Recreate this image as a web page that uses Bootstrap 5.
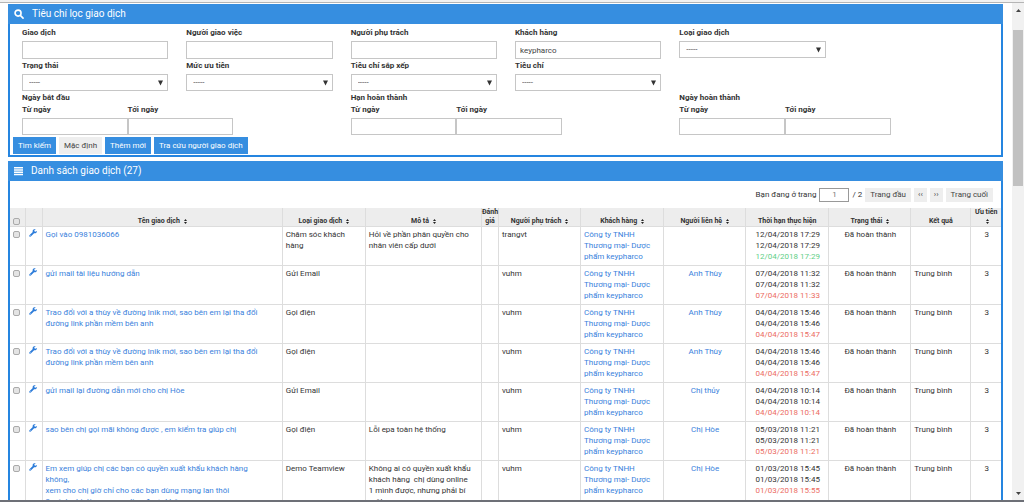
<!DOCTYPE html>
<html lang="vi">
<head>
<meta charset="utf-8">
<meta name="viewport" content="width=device-width, initial-scale=1">
<title>Danh sách giao dịch</title>
<link rel="stylesheet" href="https://cdn.jsdelivr.net/npm/bootstrap@5.3.0/dist/css/bootstrap.min.css">
<style>
  :root { --brand: #368ee0; --brand-edge: #2585e0; --line: #ddd; --soft: #eee; --link: #3a7fdc; }
  body { font: 400 8px/11px Roboto, sans-serif; color: #333; background: #fff; }
  a { color: var(--link); text-decoration: none; }
  .top-edge { height: 3px; background: #f1f1f1; border-bottom: 1px solid #b5b5b5; }
  .bottom-edge { height: 2px; background: #6d7077; }
  .content { padding: 1px 9px 0 8px; gap: 4px; min-width: 0; }

  .panel { border: 2px solid var(--brand-edge); border-top: 0; background: #fff; }
  .panel-title { height: 20px; margin: 0 -2px; padding: 0 6px; background: var(--brand); color: #fff;
    font-size: 10px; line-height: 20px; font-weight: 400; }
  .panel-title svg { width: 10px; height: 10px; }
  .panel-title.wide-gap { gap: 8px; }
  .panel-title.slim-gap { gap: 7px; }

  .filters { padding: 3px 1px 1px 4px; }
  .filters .field { padding: 0 10px 0 8px; }
  .field label, .field legend { display: block; margin: 0; font-size: 8px; line-height: 12px; font-weight: 700; float: none; color: #333; }
  .field .form-control, .field .form-select { height: 17px; min-height: 0; padding: 0 6px; border: 1px solid #c6c6c6; border-radius: 0;
    font-size: 8px; line-height: 15px; color: #444; }
  .field .form-control { padding: 0 4px; }
  .field .form-select { background-image: url("data:image/svg+xml,%3Csvg xmlns='http://www.w3.org/2000/svg' viewBox='0 0 6 6'%3E%3Cpath fill='%23333' d='M0 0h6L3 6z'/%3E%3C/svg%3E");
    background-size: 5px 6px; background-position: right 4px center; }
  .field > label { margin-bottom: 2px; }
  .field > .form-control { height: 18px; }
  .line-one { min-height: 33px; }
  .line-two { min-height: 32px; }
  .span-part { flex: 0 0 34%; }
  .span-part label { line-height: 11px; margin-bottom: 3px; }

  .tool-btn { height: 17px; padding: 0 4px; border: 0; border-radius: 0; font-size: 8px; line-height: 17px; }
  .tool-btn.blue { background: var(--brand); color: #fff; }
  .tool-btn.plain { background: var(--soft); color: #444; }
  .actions { gap: 3px; padding-top: 2px; margin-left: -1px; }
  .actions .tool-btn { padding: 0 5px; }

  .pager { height: 27px; padding: 0 8px 0 0; gap: 3px; }
  .pager .form-control { width: 30px; height: 14px; min-height: 0; padding: 0; border: 1px solid #999; border-radius: 0; font-size: 8px; line-height: 12px; color: #777; }
  .pager .tool-btn { height: 14px; line-height: 14px; }
  .pager .tool-btn.wide { padding: 0 5px; }

  .deals { table-layout: fixed; width: 100%; margin: 0; border-collapse: collapse; }
  .deals th, .deals td { padding: 0; border: 1px solid var(--line); border-top: 0; }
  .deals tr > :first-child { border-left: 0; }
  .deals tr > :last-child { border-right: 0; }
  .deals th { height: 18px; background: #ededed; font-size: 7px; line-height: 9px; font-weight: 700; text-align: center; vertical-align: bottom; }
  .deals td { height: 39px; padding: 2px 2px 3px 3px; vertical-align: top; }
  .deals th svg { width: 3px; height: 5px; margin-left: 2px; }
  .deals td svg { display: block; width: 8px; height: 8px; margin: 0 auto; }
  .deals .tick { text-align: center; padding-left: 0; padding-right: 1px; }
  .deals .form-check-input { float: none; display: block; width: 7px; height: 7px; margin: 2px auto; border: 1px solid #aaa; border-radius: 2px;
    background-color: #e4e4e4; }
  .deals th .form-check-input { margin-bottom: 1px; }
  .col-tick { width: 15px } .col-tool { width: 17px } .col-name { width: 240px } .col-desc { width: 116px }
  .col-rate { width: 17px } .col-mid { width: 83px } .col-less { width: 82px } .col-result { width: 60px } .col-rank { width: 30px }
  .on-time { color: #5fcf87; } .late { color: #ec6c62; }

  .scroll-rail { flex: 0 0 12px; background: #f1f1f1; padding: 5px 1px 4px; }
  .scroll-rail svg { width: 5px; height: 3px; margin: 1px auto; flex: none; }
  .scroll-thumb { height: 32%; margin-top: 17px; background: #c1c1c1; }
</style>
</head>
<body>
<svg class="d-none" aria-hidden="true">
  <symbol id="wrench" viewBox="0 0 16 16"><path fill="#2b7bd9" d="M15.700 4.200 12.800 5.700 10.700 4.500V2.600L13.500 1C11.500-.3 7.400.6 7.200 4.300c0 .6.100 1.100.300 1.600L.9 12.300c-1.700 1.800.9 4.400 2.700 2.700l6.600-6.500c3.100 1 6.100-1.200 5.500-4.300zM2.400 12.700a.9.9 0 1 1 0 1.800.9.9 0 0 1 0-1.800z"/></symbol>
  <symbol id="sort" viewBox="0 0 6 10"><path fill="#222" d="M3 0 6 4H0zM0 6h6L3 10z"/></symbol>
</svg>
<div class="d-flex flex-column vh-100 overflow-hidden">
  <div class="top-edge flex-shrink-0"></div>
  <div class="d-flex flex-grow-1 overflow-hidden">
    <main class="content flex-grow-1 d-flex flex-column overflow-hidden">

      <section class="panel flex-shrink-0">
        <h1 class="panel-title wide-gap d-flex align-items-center">
          <svg viewBox="0 0 16 16" fill="none" stroke="#fff" stroke-width="2.600" stroke-linecap="round" aria-hidden="true"><circle cx="6.500" cy="6.500" r="4.800"/><path d="m10.500 10.500 4 4"/></svg>
          Tiêu chí lọc giao dịch
        </h1>
        <form class="filters">
          <div class="row g-0 line-one">
            <div class="col-2 field"><label for="deal">Giao dịch</label><input id="deal" class="form-control"></div>
            <div class="col-2 field"><label for="giver">Người giao việc</label><input id="giver" class="form-control"></div>
            <div class="col-2 field"><label for="owner">Người phụ trách</label><input id="owner" class="form-control"></div>
            <div class="col-2 field"><label for="client">Khách hàng</label><input id="client" class="form-control" value="keypharco"></div>
            <div class="col-2 field"><label for="kind">Loại giao dịch</label><select id="kind" class="form-select"><option>-----</option></select></div>
          </div>
          <div class="row g-0 line-two">
            <div class="col-2 field"><label for="state">Trạng thái</label><select id="state" class="form-select"><option>-----</option></select></div>
            <div class="col-2 field"><label for="priority">Mức ưu tiên</label><select id="priority" class="form-select"><option>-----</option></select></div>
            <div class="col-2 field"><label for="sortby">Tiêu chí sắp xếp</label><select id="sortby" class="form-select"><option>-----</option></select></div>
            <div class="col-2 field"><label for="criterion">Tiêu chí</label><select id="criterion" class="form-select"><option>-----</option></select></div>
          </div>
          <div class="row g-0">
            <fieldset class="col-4 field"><legend>Ngày bắt đầu</legend>
              <div class="d-flex">
                <div class="span-part"><label for="s1">Từ ngày</label><input id="s1" class="form-control"></div>
                <div class="span-part"><label for="s2">Tới ngày</label><input id="s2" class="form-control"></div>
              </div>
            </fieldset>
            <fieldset class="col-4 field"><legend>Hạn hoàn thành</legend>
              <div class="d-flex">
                <div class="span-part"><label for="d1">Từ ngày</label><input id="d1" class="form-control"></div>
                <div class="span-part"><label for="d2">Tới ngày</label><input id="d2" class="form-control"></div>
              </div>
            </fieldset>
            <fieldset class="col-4 field"><legend>Ngày hoàn thành</legend>
              <div class="d-flex">
                <div class="span-part"><label for="f1">Từ ngày</label><input id="f1" class="form-control"></div>
                <div class="span-part"><label for="f2">Tới ngày</label><input id="f2" class="form-control"></div>
              </div>
            </fieldset>
          </div>
          <div class="d-flex actions">
            <button type="button" class="btn tool-btn blue">Tìm kiếm</button>
            <button type="button" class="btn tool-btn plain">Mặc định</button>
            <button type="button" class="btn tool-btn blue">Thêm mới</button>
            <button type="button" class="btn tool-btn blue">Tra cứu người giao dịch</button>
          </div>
        </form>
      </section>

      <section class="panel flex-shrink-0">
        <h2 class="panel-title slim-gap d-flex align-items-center">
          <svg viewBox="0 0 20 20" fill="#fff" aria-hidden="true"><path d="M0 2h18v3H0zM0 6.500h18v3H0zM0 11h18v3H0zM0 15.500h18v3H0z"/></svg>
          Danh sách giao dịch (27)
        </h2>
        <div class="pager d-flex align-items-center justify-content-end">
          <label for="page">Bạn đang ở trang</label>
          <input id="page" class="form-control text-center" value="1">
          <span>/ 2</span>
          <button type="button" class="btn tool-btn plain wide">Trang đầu</button>
          <button type="button" class="btn tool-btn plain" aria-label="Trang trước">‹‹</button>
          <button type="button" class="btn tool-btn plain" aria-label="Trang sau">››</button>
          <button type="button" class="btn tool-btn plain wide">Trang cuối</button>
        </div>
        <table class="deals">
          <colgroup><col class="col-tick"><col class="col-tool"><col class="col-name"><col class="col-mid"><col class="col-desc"><col class="col-rate"><col class="col-less"><col class="col-mid"><col class="col-less"><col class="col-mid"><col class="col-less"><col class="col-result"><col class="col-rank"></colgroup>
          <thead>
            <tr>
              <th class="tick"><input type="checkbox" class="form-check-input" aria-label="Chọn tất cả"></th>
              <th></th>
              <th>Tên giao dịch <svg><use href="#sort"/></svg></th>
              <th>Loại giao dịch <svg><use href="#sort"/></svg></th>
              <th>Mô tả <svg><use href="#sort"/></svg></th>
              <th>Đánh giá</th>
              <th>Người phụ trách <svg><use href="#sort"/></svg></th>
              <th>Khách hàng <svg><use href="#sort"/></svg></th>
              <th>Người liên hệ <svg><use href="#sort"/></svg></th>
              <th>Thời hạn thực hiện</th>
              <th>Trạng thái <svg><use href="#sort"/></svg></th>
              <th>Kết quả</th>
              <th>Ưu tiên<br><svg><use href="#sort"/></svg></th>
            </tr>
          </thead>
          <tbody>
            <tr>
              <td class="tick"><input type="checkbox" class="form-check-input" aria-label="Chọn"></td>
              <td class="tick"><a href="#" aria-label="Sửa"><svg><use href="#wrench"/></svg></a></td>
              <td><a href="#">Gọi vào 0981036066</a></td>
              <td>Chăm sóc khách<br>hàng</td>
              <td>Hỏi về phần phân quyền cho<br>nhân viên cấp dưới</td>
              <td></td><td>trangvt</td>
              <td><a href="#">Công ty TNHH<br>Thương mại- Dược<br>phẩm keypharco</a></td>
              <td></td>
              <td class="text-center">12/04/2018 17:29<br>12/04/2018 17:29<br><span class="on-time">12/04/2018 17:29</span></td>
              <td class="text-center">Đã hoàn thành</td><td></td><td class="text-center">3</td>
            </tr>
            <tr>
              <td class="tick"><input type="checkbox" class="form-check-input" aria-label="Chọn"></td>
              <td class="tick"><a href="#" aria-label="Sửa"><svg><use href="#wrench"/></svg></a></td>
              <td><a href="#">gửi mail tài liệu hướng dẫn</a></td>
              <td>Gửi Email</td><td></td><td></td><td>vuhm</td>
              <td><a href="#">Công ty TNHH<br>Thương mại- Dược<br>phẩm keypharco</a></td>
              <td class="text-center"><a href="#">Anh Thùy</a></td>
              <td class="text-center">07/04/2018 11:32<br>07/04/2018 11:32<br><span class="late">07/04/2018 11:33</span></td>
              <td class="text-center">Đã hoàn thành</td><td>Trung bình</td><td class="text-center">3</td>
            </tr>
            <tr>
              <td class="tick"><input type="checkbox" class="form-check-input" aria-label="Chọn"></td>
              <td class="tick"><a href="#" aria-label="Sửa"><svg><use href="#wrench"/></svg></a></td>
              <td><a href="#">Trao đổi với a thùy về đường lnik mới, sao bên em lại tha đổi<br>đường link phần mềm bên anh</a></td>
              <td>Gọi điện</td><td></td><td></td><td>vuhm</td>
              <td><a href="#">Công ty TNHH<br>Thương mại- Dược<br>phẩm keypharco</a></td>
              <td class="text-center"><a href="#">Anh Thùy</a></td>
              <td class="text-center">04/04/2018 15:46<br>04/04/2018 15:46<br><span class="late">04/04/2018 15:47</span></td>
              <td class="text-center">Đã hoàn thành</td><td>Trung bình</td><td class="text-center">3</td>
            </tr>
            <tr>
              <td class="tick"><input type="checkbox" class="form-check-input" aria-label="Chọn"></td>
              <td class="tick"><a href="#" aria-label="Sửa"><svg><use href="#wrench"/></svg></a></td>
              <td><a href="#">Trao đổi với a thùy về đường lnik mới, sao bên em lại tha đổi<br>đường link phần mềm bên anh</a></td>
              <td>Gọi điện</td><td></td><td></td><td>vuhm</td>
              <td><a href="#">Công ty TNHH<br>Thương mại- Dược<br>phẩm keypharco</a></td>
              <td class="text-center"><a href="#">Anh Thùy</a></td>
              <td class="text-center">04/04/2018 15:46<br>04/04/2018 15:46<br><span class="late">04/04/2018 15:47</span></td>
              <td class="text-center">Đã hoàn thành</td><td>Trung bình</td><td class="text-center">3</td>
            </tr>
            <tr>
              <td class="tick"><input type="checkbox" class="form-check-input" aria-label="Chọn"></td>
              <td class="tick"><a href="#" aria-label="Sửa"><svg><use href="#wrench"/></svg></a></td>
              <td><a href="#">gửi mail lại đường dẫn mới cho chị Hòe</a></td>
              <td>Gửi Email</td><td></td><td></td><td>vuhm</td>
              <td><a href="#">Công ty TNHH<br>Thương mại- Dược<br>phẩm keypharco</a></td>
              <td class="text-center"><a href="#">Chị thủy</a></td>
              <td class="text-center">04/04/2018 10:14<br>04/04/2018 10:14<br><span class="late">04/04/2018 10:14</span></td>
              <td class="text-center">Đã hoàn thành</td><td>Trung bình</td><td class="text-center">3</td>
            </tr>
            <tr>
              <td class="tick"><input type="checkbox" class="form-check-input" aria-label="Chọn"></td>
              <td class="tick"><a href="#" aria-label="Sửa"><svg><use href="#wrench"/></svg></a></td>
              <td><a href="#">sao bên chị gọi mãi không được , em kiểm tra giúp chị</a></td>
              <td>Gọi điện</td><td>Lỗi epa toàn hệ thống</td><td></td><td>vuhm</td>
              <td><a href="#">Công ty TNHH<br>Thương mại- Dược<br>phẩm keypharco</a></td>
              <td class="text-center"><a href="#">Chị Hòe</a></td>
              <td class="text-center">05/03/2018 11:21<br>05/03/2018 11:21<br><span class="late">05/03/2018 11:21</span></td>
              <td class="text-center">Đã hoàn thành</td><td>Trung bình</td><td class="text-center">3</td>
            </tr>
            <tr>
              <td class="tick"><input type="checkbox" class="form-check-input" aria-label="Chọn"></td>
              <td class="tick"><a href="#" aria-label="Sửa"><svg><use href="#wrench"/></svg></a></td>
              <td><a href="#">Em xem giúp chị các bạn có quyền xuất khẩu khách hàng<br>không,<br>xem cho chị giờ chỉ cho các bạn dùng mạng lan thôi<br>3 mình chị dùng xem online được không</a></td>
              <td>Demo Teamview</td><td>Không ai có quyền xuất khẩu<br>khách hàng&nbsp; chị dùng online<br>1 mình được, nhưng phải bí<br>mật</td><td></td><td>vuhm</td>
              <td><a href="#">Công ty TNHH<br>Thương mại- Dược<br>phẩm keypharco</a></td>
              <td class="text-center"><a href="#">Chị Hòe</a></td>
              <td class="text-center">01/03/2018 15:45<br>01/03/2018 15:45<br><span class="late">01/03/2018 15:55</span></td>
              <td class="text-center">Đã hoàn thành</td><td>Trung bình</td><td class="text-center">3</td>
            </tr>
          </tbody>
        </table>
      </section>
    </main>

    <div class="scroll-rail d-flex flex-column" aria-hidden="true">
      <svg viewBox="0 0 10 6"><path fill="#444" d="M5 0l5 6H0z"/></svg>
      <div class="scroll-thumb"></div>
      <svg class="mt-auto" viewBox="0 0 10 6"><path fill="#444" d="M0 0h10L5 6z"/></svg>
    </div>
  </div>
  <div class="bottom-edge flex-shrink-0"></div>
</div>
<script src="https://cdn.jsdelivr.net/npm/bootstrap@5.3.0/dist/js/bootstrap.bundle.min.js"></script>
</body>
</html>
